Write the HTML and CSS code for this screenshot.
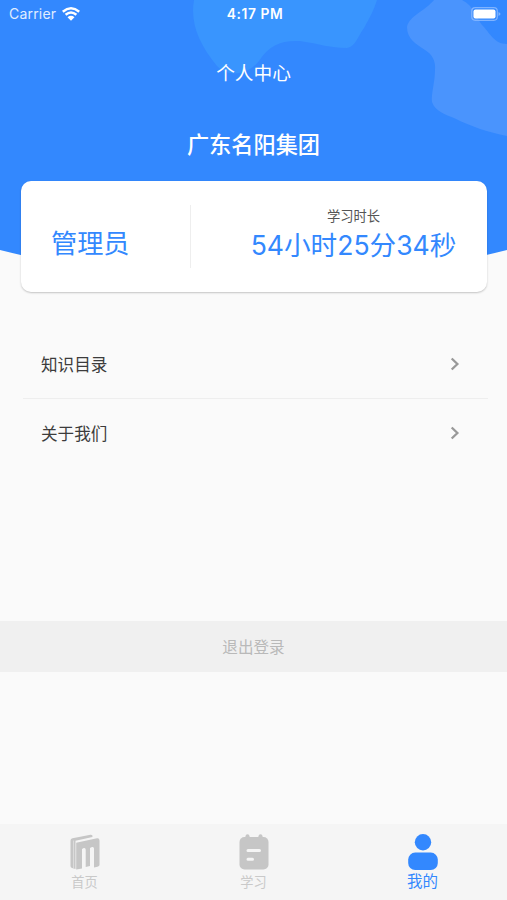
FILE: index.html
```
<!DOCTYPE html>
<html lang="zh-CN">
<head>
<meta charset="utf-8">
<title>个人中心</title>
<link rel="stylesheet" href="styles.css">
</head>
<body>
<div class="app">
  <svg class="backdrop" viewBox="0 0 507 280" aria-hidden="true">
    <path fill="#3388fe" d="M0 0H507V250Q380 282 253.500 282T0 250Z"/>
    <path fill="#3995fe" d="M194 0C190 23 199 44 217 66C229 78 248 75 259 61C269 45 282 40 300 41C320 44 330 48 347 48C356 46 358 36 364 28C370 17 374 10 377 0Z"/>
    <path fill="#4a94fd" d="M434 0C425 11 409 16 407 27C407 39 416 44 425 50C432 54 436 61 435 70C435 82 431 94 432 102C435 111 446 115 454 118C472 127 488 132 507 136V44C494 44 490 33 482 25C476 17 474 6 462 0Z"/>
  </svg>
  <header class="status">
    <div class="carrier">
      <span>Carrier</span>
      <svg class="wifi" viewBox="0 0 18 14" aria-hidden="true">
        <path d="M.800 4.700Q9-2.100 17.200 4.700M3.600 7.800Q9 3.300 14.400 7.800" fill="none" stroke="#fff" stroke-width="2.500"/>
        <path d="M5.500 10.200Q9 7.500 12.500 10.200L9 13.800Z" fill="#fff"/>
      </svg>
    </div>
    <time class="clock">4:17 PM</time>
    <svg class="battery" viewBox="0 0 30 14" aria-hidden="true">
      <rect x=".7" y=".7" width="25.600" height="12.600" rx="3.500" fill="none" stroke="#7fb3ff" stroke-width="1.200"/>
      <rect x="2.500" y="2.500" width="22" height="9" rx="2" fill="#fff"/>
      <path d="M27.500 5V9Q29.500 8 29.500 7T27.500 5Z" fill="#7fb3ff"/>
    </svg>
  </header>
  <h1 class="title">个人中心</h1>
  <h2 class="company">广东名阳集团</h2>
  <section class="card">
    <div class="role">管理员</div>
    <div class="study">
      <span class="study-label">学习时长</span>
      <span class="study-time">54小时25分34秒</span>
    </div>
  </section>
  <nav class="menu">
    <div class="row"><span>知识目录</span><svg class="chevron" viewBox="0 0 10 14"><path d="M1.700 1.500L7.400 7L1.700 12.500"/></svg></div>
    <div class="row"><span>关于我们</span><svg class="chevron" viewBox="0 0 10 14"><path d="M1.700 1.500L7.400 7L1.700 12.500"/></svg></div>
  </nav>
  <button class="logout">退出登录</button>
  <footer class="tabs">
    <div class="tab">
      <svg class="icon" viewBox="0 0 32 36" aria-hidden="true">
        <path fill="#c6c6c6" d="M1.500 6.500Q1.500 4.800 3.500 4.300L21.500 .700Q24 .500 23.500 3L6.500 6.800V35L3 34Q1.500 33.500 1.500 32Z"/>
        <path fill="none" stroke="#f5f5f5" stroke-width=".5" d="M4.600 6.500V34"/>
        <path fill="#c6c6c6" d="M7.200 8.700L28 4.300Q30.500 4 30.500 6.500V31Q30.500 32.500 25 33.500V14.500Q25 12.500 23 13L21 14V32L16.700 33V15.500Q16.500 13.500 14.800 14L13 15V34.500L7.200 35.500Z"/>
      </svg>
      <span>首页</span>
    </div>
    <div class="tab">
      <svg class="icon" viewBox="0 0 32 36" aria-hidden="true">
        <g fill="#c6c6c6"><rect x="1.500" y="3" width="29" height="32.500" rx="5"/><circle cx="9.500" cy="2.300" r="2"/><circle cx="22.500" cy="2.300" r="2"/></g>
        <path fill="none" stroke="#f5f5f5" stroke-width="3" stroke-linecap="round" d="M10 16.500H21.500M10 25.300H14.500"/>
      </svg>
      <span>学习</span>
    </div>
    <div class="tab active">
      <svg class="icon" viewBox="0 0 32 36" aria-hidden="true">
        <circle cx="16" cy="8.300" r="8.200"/><rect x="1.200" y="18.600" width="29.600" height="17.400" rx="7"/>
      </svg>
      <span>我的</span>
    </div>
  </footer>
</div>
</body>
</html>
```
FILE: styles.css
```
* { box-sizing: border-box; }
body { margin: 0; font-family: Inter, "Noto Sans CJK SC", sans-serif; }
.app {
  position: relative;
  isolation: isolate;
  display: flex;
  flex-direction: column;
  height: 900px;
  background: #fafafa;
  overflow: hidden;
}
.backdrop { position: absolute; z-index: -1; top: 0; left: 0; width: 100%; height: 280px; }
.status {
  display: grid;
  grid-template-columns: 1fr auto 1fr;
  align-items: center;
  height: 27px;
  padding: 0 6px 0 9px;
  color: #fff;
  font-size: 14px;
}
.carrier { display: flex; align-items: center; gap: 6px; color: #e0edff; letter-spacing: .2px; }
.wifi { width: 18px; height: 14px; }
.clock { font-size: 13.800px; font-weight: 600; letter-spacing: .6px; }
.battery { width: 30px; height: 14px; justify-self: end; }
.title {
  height: 40px;
  margin: 27px 0 0;
  color: #fff;
  font-size: 18.700px;
  font-weight: 400;
  line-height: 40px;
  text-align: center;
}
.company {
  height: 40px;
  margin: 31px 0 0;
  color: #fff;
  font-size: 22.200px;
  font-weight: 500;
  line-height: 40px;
  text-align: center;
}
.card {
  display: flex;
  align-items: center;
  height: 111px;
  margin: 16px 20px 0 21px;
  background: #fff;
  border-radius: 10px;
  box-shadow: 0 1px 2px rgba(0, 0, 0, .22);
  color: #3388fe;
}
.role {
  width: 170px;
  height: 63px;
  padding-left: 30px;
  border-right: 1px solid #eee;
  font-size: 26.200px;
  line-height: 78px;
}
.study { flex: 1; display: flex; flex-direction: column; align-items: center; padding-left: 29px; }
.study-label { margin-top: -3px; color: #555; font-size: 13.300px; line-height: 20px; }
.study-time { font-size: 26.600px; line-height: 38px; white-space: nowrap; }
.menu { margin: 38px 19px 0 23px; }
.row {
  display: flex;
  align-items: center;
  justify-content: space-between;
  height: 68px;
  padding: 0 28px 0 18px;
  color: #3c3c3c;
  font-size: 16.600px;
}
.row + .row { height: 69px; border-top: 1px solid #eee; }
.chevron { width: 10px; height: 14px; fill: none; stroke: #999; stroke-width: 2.300; }
.logout {
  height: 51px;
  margin: 154px 0 0;
  padding: 0 0 2px;
  border: 0;
  background: #f0f0f0;
  color: #b9b9b9;
  font: inherit;
  font-size: 15.600px;
}
.tabs { display: grid; grid-template-columns: repeat(3, 1fr); height: 76px; margin-top: auto; background: #f5f5f5; }
.tab {
  display: flex;
  flex-direction: column;
  align-items: center;
  padding-top: 10px;
  color: #c9c9c9;
  font-size: 13.200px;
  line-height: 24px;
}
.icon { width: 32px; height: 36px; fill: currentColor; }
.active { color: #3388fe; font-size: 15.500px; line-height: 23px; }
```
